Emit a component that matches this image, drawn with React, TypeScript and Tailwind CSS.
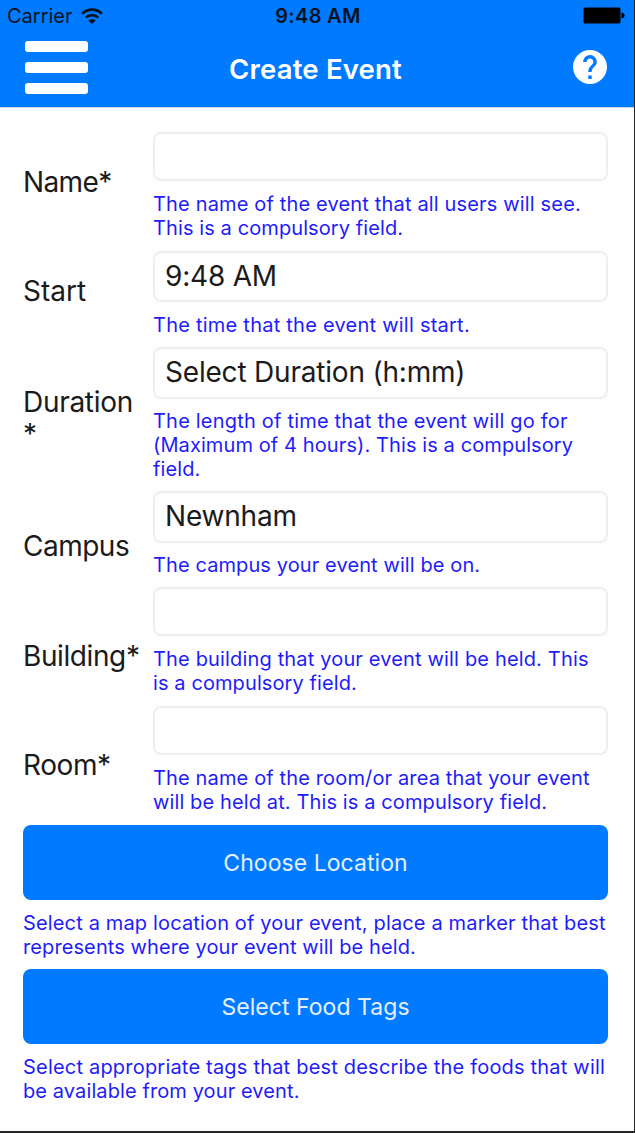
type HintLine = { text: string; tracking?: string };

type FieldProps = {
  label: string[];
  value?: string;
  hint: HintLine[];
  row: string;
  box: string;
  labelClass: string;
};

const fields: FieldProps[] = [
  {
    label: ["Name*"],
    hint: [
      { text: "The name of the event that all users will see.", tracking: "tracking-[0.16px]" },
      { text: "This is a compulsory field." },
    ],
    row: "h-[119px]",
    box: "h-[49px] mb-[11px]",
    labelClass: "pt-[34px] tracking-[-0.6px]",
  },
  {
    label: ["Start"],
    value: "9:48 AM",
    hint: [{ text: "The time that the event will start.", tracking: "tracking-[0.24px]" }],
    row: "h-[96px]",
    box: "h-[51px] mb-[11px]",
    labelClass: "pt-[24px] tracking-[0px]",
  },
  {
    label: ["Duration", "*"],
    value: "Select Duration (h:mm)",
    hint: [
      { text: "The length of time that the event will go for", tracking: "tracking-[0.2px]" },
      { text: "(Maximum of 4 hours). This is a compulsory" },
      { text: "field." },
    ],
    row: "h-[144px]",
    box: "h-[52px] mb-[10px]",
    labelClass: "pt-[39px] tracking-[-0.3px]",
  },
  {
    label: ["Campus"],
    value: "Newnham",
    hint: [{ text: "The campus your event will be on." }],
    row: "h-[96px]",
    box: "h-[52px] mb-[10px]",
    labelClass: "pt-[39px] tracking-[-0.5px]",
  },
  {
    label: ["Building*"],
    hint: [
      { text: "The building that your event will be held. This", tracking: "tracking-[0.16px]" },
      { text: "is a compulsory field." },
    ],
    row: "h-[119px]",
    box: "h-[49px] mb-[11px]",
    labelClass: "pt-[53px] tracking-[-0.4px]",
  },
  {
    label: ["Room*"],
    hint: [
      { text: "The name of the room/or area that your event", tracking: "tracking-[0.14px]" },
      { text: "will be held at. This is a compulsory field.", tracking: "tracking-[0.12px]" },
    ],
    row: "h-[119px]",
    box: "h-[49px] mb-[11px]",
    labelClass: "pt-[43px] tracking-[-0.4px]",
  },
];

function Hint({ lines }: { lines: HintLine[] }) {
  return (
    <div className="text-[20px] leading-[24px] whitespace-nowrap text-[#1f1cfb]">
      {lines.map((line) => (
        <div key={line.text} className={line.tracking ?? "tracking-[0.1px]"}>
          {line.text}
        </div>
      ))}
    </div>
  );
}

function Field({ label, value, hint, row, box, labelClass }: FieldProps) {
  return (
    <div className={`flex ${row}`}>
      <div className={`w-[130px] shrink-0 text-[28px] leading-[32px] ${labelClass}`}>
        {label.map((part) => (
          <div key={part}>{part}</div>
        ))}
      </div>
      <div className="flex-1">
        <div
          className={`flex items-center rounded-lg border-2 border-[#eeeeee] pb-[2px] pl-[10px] text-[28px] leading-[32px] tracking-[-0.2px] whitespace-nowrap ${box}`}
        >
          {value}
        </div>
        <Hint lines={hint} />
      </div>
    </div>
  );
}

function Action({ title, hint }: { title: string; hint: HintLine[] }) {
  return (
    <div className="h-[144px]">
      <button className="mb-[11px] flex h-[75px] w-full items-center justify-center rounded-lg bg-[#007aff] pt-[2px] text-[23px] tracking-[0.05px] text-[#e4f0ff]">
        {title}
      </button>
      <Hint lines={hint} />
    </div>
  );
}

export default function App() {
  return (
    <div className="h-[1133px] w-[635px] overflow-hidden border-r border-b-2 border-[#262628] bg-[#fefefe] font-['Inter',sans-serif] text-[#1b1b1b]">
      <header className="h-[108px] border-b border-[#c9d3e0] bg-[#007aff]">
        <div className="flex h-[32px] items-center justify-between pr-[9px] pl-[7px] text-[#06121f]">
          <div className="flex w-[200px] items-center gap-[8px] text-[20px]">
            <span>Carrier</span>
            <svg width="22" height="17" viewBox="0 0 22 17" fill="none" stroke="currentColor">
              <path d="M1.2 5.7a14 14 0 0 1 19.6 0" strokeWidth="2.8" />
              <path d="M4.8 9.6a9 9 0 0 1 12.4 0" strokeWidth="2.6" />
              <path d="M7.2 12.4a5.5 5.5 0 0 1 7.6 0L11 16z" fill="currentColor" stroke="none" />
            </svg>
          </div>
          <div className="pl-[4px] text-[20px] font-semibold tracking-[0.3px]">9:48 AM</div>
          <div className="flex w-[200px] justify-end">
            <svg width="42" height="18" viewBox="0 0 42 18" className="text-black">
              <rect x="0.5" y="0.5" width="37" height="16" rx="1.5" fill="currentColor" />
              <path d="M38.5 5.500c4 .5 4 5.500 0 6z" fill="currentColor" />
            </svg>
          </div>
        </div>
        <div className="flex h-[75px] justify-between pr-[27px] pl-[24px] text-white">
          <div className="flex w-[100px] flex-col gap-[10px] pt-[9px] pl-[0.5px]">
            <div className="h-[11px] w-[63px] rounded-[3px] bg-white" />
            <div className="h-[11px] w-[63px] rounded-[3px] bg-white" />
            <div className="h-[11px] w-[63px] rounded-[3px] bg-white" />
          </div>
          <h1 className="pt-[19px] text-[27.500px] leading-[36px] font-semibold tracking-[0.2px]">Create Event</h1>
          <div className="flex w-[100px] justify-end pt-[18px]">
            <svg width="34" height="34" viewBox="2 2 20 20" fill="currentColor">
              <path d="M12 2C6.480 2 2 6.480 2 12s4.480 10 10 10 10-4.480 10-10S17.520 2 12 2zm1 17h-2v-2h2v2zm2.070-7.750l-.9.920C13.450 12.900 13 13.500 13 15h-2v-.5c0-1.100.450-2.100 1.170-2.830l1.240-1.260c.370-.360.590-.860.590-1.410 0-1.100-.9-2-2-2s-2 .9-2 2H8c0-2.210 1.790-4 4-4s4 1.790 4 4c0 .880-.360 1.680-.930 2.250z" />
            </svg>
          </div>
        </div>
      </header>
      <main className="pt-[24px] pr-[26px] pl-[23px]">
        {fields.map((field) => (
          <Field key={field.label[0]} {...field} />
        ))}
        <Action
          title="Choose Location"
          hint={[
            { text: "Select a map location of your event, place a marker that best", tracking: "tracking-[0.15px]" },
            { text: "represents where your event will be held." },
          ]}
        />
        <Action
          title="Select Food Tags"
          hint={[
            { text: "Select appropriate tags that best describe the foods that will", tracking: "tracking-[0.2px]" },
            { text: "be available from your event." },
          ]}
        />
      </main>
    </div>
  );
}
